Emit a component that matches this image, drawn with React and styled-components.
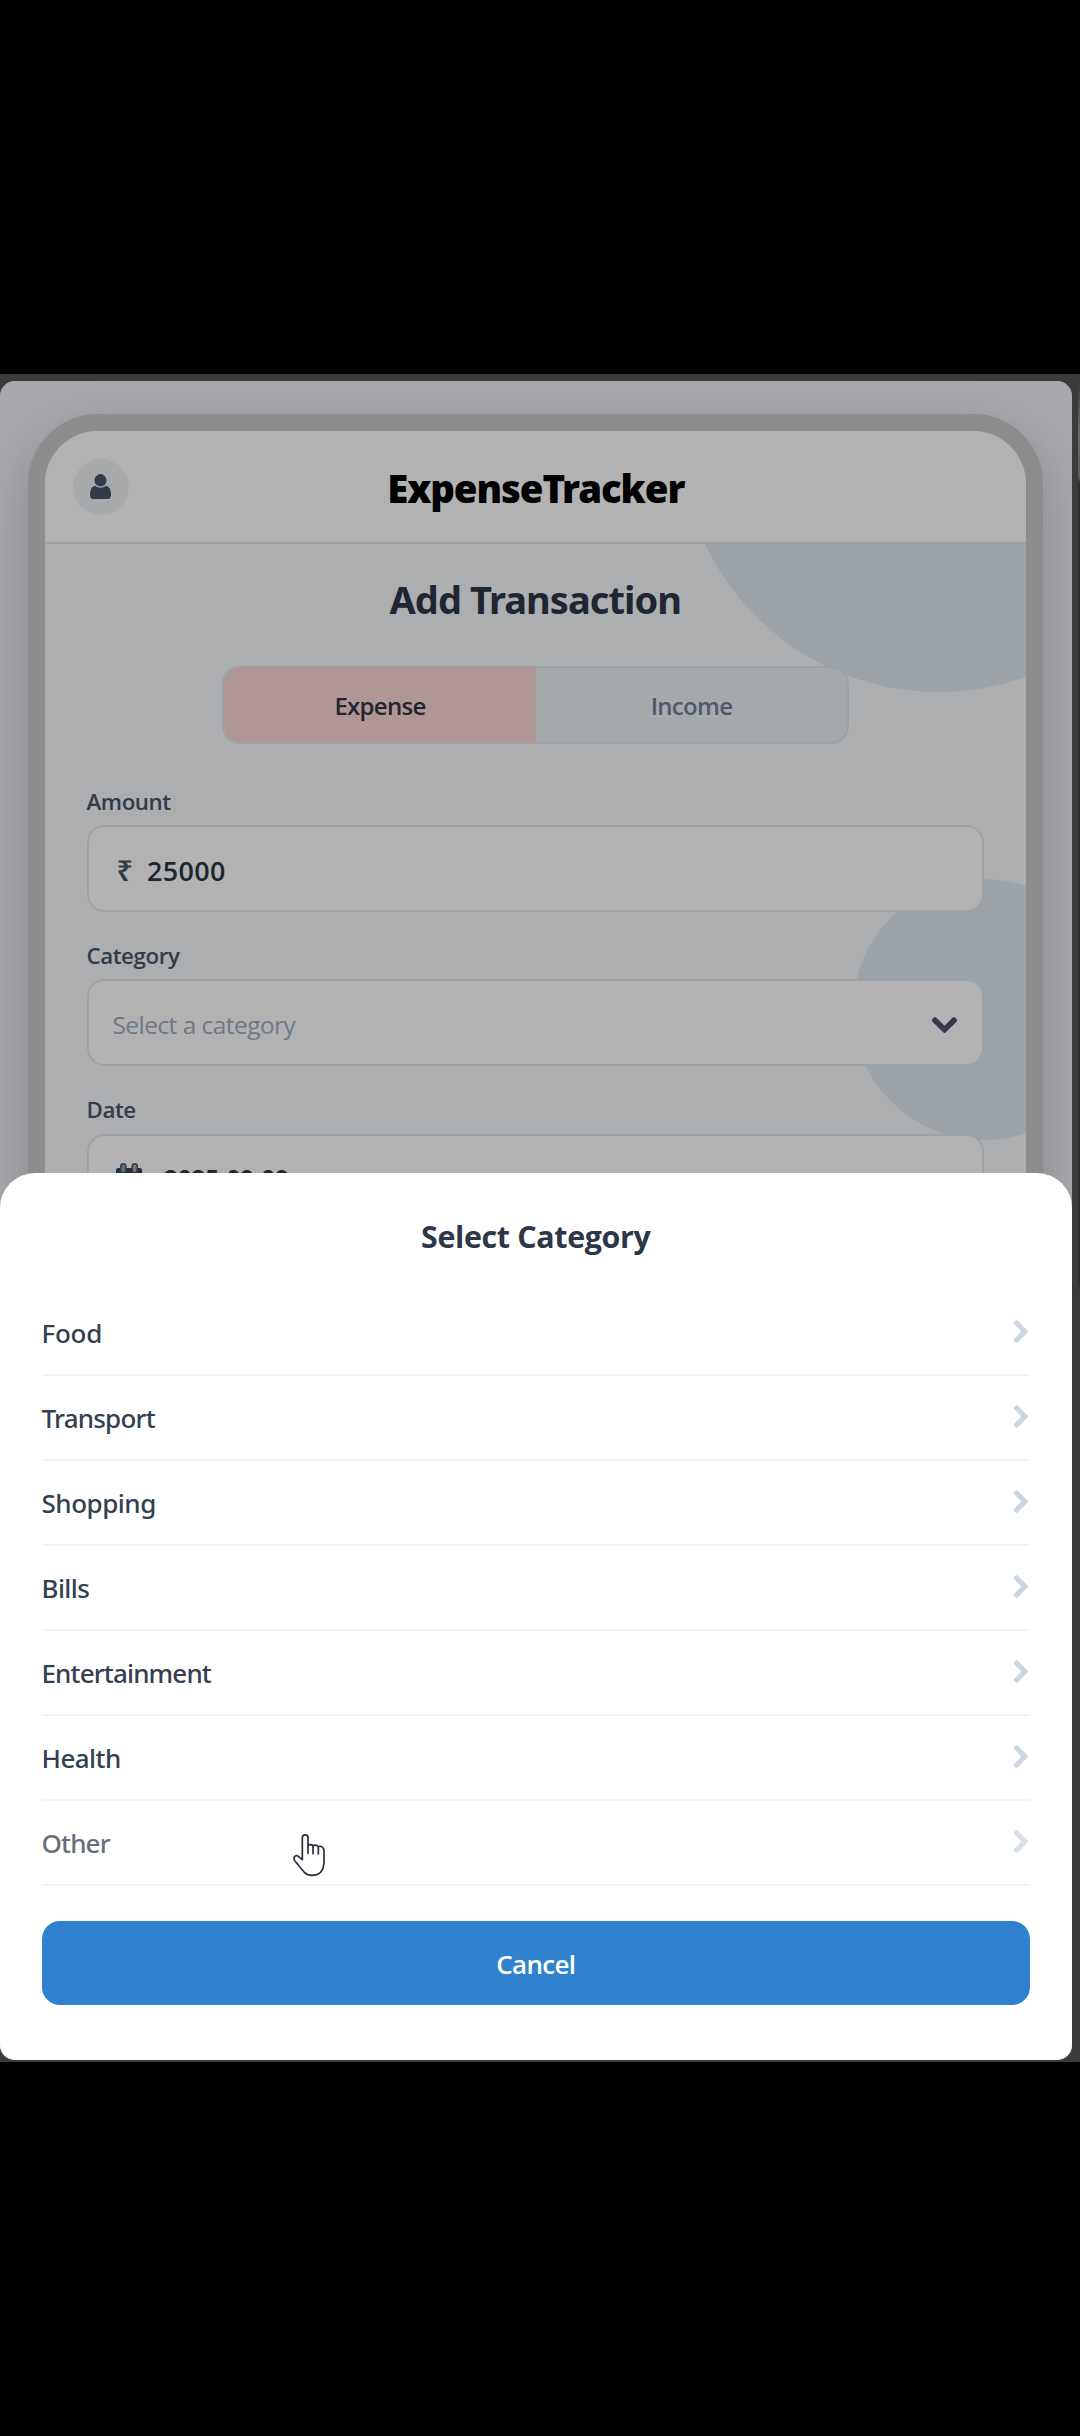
import React from "react";
import styled, { createGlobalStyle } from "styled-components";
import { FaChevronDown, FaChevronRight } from "react-icons/fa";

const sans = `"Open Sans", "Noto Sans", sans-serif`;
const noto = `"Noto Sans", "Open Sans", sans-serif`;

const GlobalStyle = createGlobalStyle`
  * { box-sizing: border-box; }
  body { margin: 0; background: #000; font-family: ${sans}; }
  h1, h2, h3, ul { margin: 0; padding: 0; }
  button { border: 0; font: inherit; background: none; }
`;

const Screen = styled.div`
  height: 2436px;
  padding-top: 374px;
  background: #000;
  overflow: hidden;
`;

const Window = styled.div`
  display: flex;
  justify-content: space-between;
  height: 1688px;
  padding: 7px 0 2px;
  background: #3b3b3b;
`;

const Page = styled.main`
  position: relative;
  width: 1071.5px;
  height: 1679px;
  padding: 33px 28.5px 0 27.5px;
  background: #f0f2f7;
  border-radius: 15px;
  overflow: hidden;
`;

const ScrollRail = styled.div`
  width: 2px;
  background: linear-gradient(#3b3b3b, #6a6a6a 50px, #5c5c5c 96px, #2e2e2e 102px, #2e2e2e 900px, #3b3b3b 910px);
`;

const Phone = styled.div`
  height: 1720px;
  border: 17.5px solid #cacaca;
  border-radius: 70px;
  overflow: hidden;
  background: #f7f9fc;
  box-shadow: 0 18px 52px rgba(0, 0, 0, 0.2);
`;

const Header = styled.header`
  display: grid;
  grid-template-columns: 1fr auto 1fr;
  align-items: center;
  height: 113px;
  padding: 0 28px;
  background: #fff;
  border-bottom: 2px solid #e4e6ea;
`;

const Avatar = styled.span`
  display: flex;
  align-items: center;
  justify-content: center;
  width: 56px;
  height: 56px;
  border-radius: 50%;
  background: #f1f2f5;
`;

const Brand = styled.h1`
  padding: 3px 0 0 1px;
  font: 900 38.3px/52px ${noto};
  letter-spacing: -1.05px;
  color: #000;
`;

const Content = styled.section`
  position: relative;
  height: 1600px;
  padding: 29px 42px 0;
  overflow: hidden;
`;

const Bubble = styled.span`
  position: absolute;
  left: ${(p) => p.$left}px;
  top: ${(p) => p.$top}px;
  width: ${(p) => p.$size}px;
  height: ${(p) => p.$size}px;
  border-radius: 50%;
  background: #e0ebf2;
`;

const Form = styled.div`
  position: relative;
  display: flex;
  flex-direction: column;
`;

const FormTitle = styled.h2`
  font: 700 38px/52px ${noto};
  letter-spacing: -0.94px;
  text-align: center;
  color: #2d3748;
`;

const Tabs = styled.div`
  display: flex;
  align-self: center;
  width: 627px;
  height: 78px;
  margin: 40.5px 0 42.5px 1px;
  border: 2px solid #e2e8f0;
  border-radius: 18px;
  background: #edf2f7;
  overflow: hidden;
`;

const Tab = styled.button`
  flex: 1;
  padding: 2px 0 0;
  font: 600 24px/34px ${sans};
  letter-spacing: -0.7px;
  background: ${(p) => (p.$active ? "#fed7d7" : "transparent")};
  color: ${(p) => (p.$active ? "#2d3748" : "#718096")};
`;

const Field = styled.div`
  display: flex;
  flex-direction: column;
  gap: 8.5px;
  margin-bottom: 28.8px;
`;

const Label = styled.label`
  padding-top: 0.5px;
  font: 600 22.3px/30px ${sans};
  letter-spacing: -0.42px;
  color: #4a5568;
`;

const Control = styled.div`
  display: flex;
  align-items: ${(p) => (p.$baseline ? "baseline" : "center")};
  height: 86.5px;
  padding: ${(p) => (p.$baseline ? "23px" : "5px")} 25px 0 ${(p) => p.$inset}px;
  border: 2px solid #e2e8f0;
  border-radius: 17.5px;
  background: #fff;
  color: #4a5568;
`;

const Currency = styled.span`
  width: 30.5px;
  font: 600 29px/40px ${noto};
`;

const Amount = styled.span`
  font: 600 26.9px/40px ${sans};
  letter-spacing: 0.35px;
  color: #2d3748;
`;

const Placeholder = styled.span`
  flex: 1;
  font: 400 24.4px/34px ${sans};
  letter-spacing: -0.5px;
  color: #a0aec0;
`;

const DateValue = styled.span`
  margin-left: 22px;
  font: 600 24.5px/34px ${noto};
  letter-spacing: -0.3px;
  color: #2d3748;
`;

const DownIcon = styled(FaChevronDown)`
  width: 25px;
  height: 28px;
  stroke: currentColor;
  stroke-width: 22;
  overflow: visible;
`;

const Overlay = styled.div`
  position: absolute;
  inset: 0;
  display: flex;
  align-items: flex-end;
  background: rgba(0, 0, 0, 0.3);
`;

const Sheet = styled.div`
  display: flex;
  flex-direction: column;
  width: 100%;
  height: 887px;
  padding: 42.5px 42px 0;
  border-radius: 35px 35px 0 0;
  background: #fff;
`;

const SheetTitle = styled.h3`
  margin-bottom: 33.5px;
  font: 700 30.4px/42px ${sans};
  letter-spacing: -0.34px;
  text-align: center;
  color: #2d3748;
`;

const List = styled.ul`
  display: flex;
  flex-direction: column;
  list-style: none;
`;

const Item = styled.li`
  display: flex;
  align-items: center;
  justify-content: space-between;
  height: 85px;
  border-bottom: 2px solid #f1f4f7;
  font: 500 26px/36px ${noto};
  letter-spacing: ${(p) => p.$tracking}px;
  color: #353f50;
`;

const Name = styled.span`
  margin-left: -0.5px;
  opacity: ${(p) => (p.$pressed ? 0.75 : 1)};
`;

const RightIcon = styled(FaChevronRight)`
  width: 15.6px;
  height: 25px;
  margin: 0 1px 2px 0;
  color: #cbd5e0;
  stroke: currentColor;
  stroke-width: 22;
  overflow: visible;
  opacity: ${(p) => p.opacity};
`;

const Cancel = styled.button`
  height: 84px;
  margin-top: 35px;
  padding: 1px 0 0;
  border-radius: 18px;
  background: #3182ce;
  color: #fff;
  font: 600 26px/36px ${sans};
  letter-spacing: -0.7px;
`;

const Pointer = styled.svg`
  position: absolute;
  left: 280px;
  top: 1439px;
  width: 60px;
  height: 70px;
`;

const categories = [
  { name: "Food", tracking: -0.25 },
  { name: "Transport", tracking: -0.8 },
  { name: "Shopping", tracking: -0.48 },
  { name: "Bills", tracking: -0.6 },
  { name: "Entertainment", tracking: -0.86 },
  { name: "Health", tracking: -0.55 },
  { name: "Other", tracking: -0.85, pressed: true },
];

function PersonIcon() {
  return (
    <svg width="21" height="25" viewBox="0 0 21 25" fill="#4a5568">
      <ellipse cx="10.500" cy="6.300" rx="6" ry="6.200" />
      <path d="M5 11.800q5.500 4 11 0q5 1 5 8.700q0 4.500-3.500 4.500h-14q-3.500 0-3.500-4.500q0-7.700 5-8.700z" />
    </svg>
  );
}

function CalendarIcon() {
  return (
    <svg width="26" height="32" viewBox="0 0 26 32">
      <path d="M2 5h22a2 2 0 0 1 2 2V28a2 2 0 0 1-2 2H2a2 2 0 0 1-2-2V7a2 2 0 0 1 2-2z" fill="#3a4558" />
      <path d="M2.500 13h21v14.500h-21z" fill="#fff" />
      <rect x="4.800" y="0.800" width="5" height="9" rx="2.500" fill="#7fa6c0" stroke="#4a5568" strokeWidth="1.500" />
      <rect x="16.200" y="0.800" width="5" height="9" rx="2.500" fill="#c3a595" stroke="#4a5568" strokeWidth="1.500" />
    </svg>
  );
}

export default function App() {
  return (
    <Screen>
      <GlobalStyle />
      <Window>
        <Page>
          <Phone>
            <Header>
              <Avatar>
                <PersonIcon />
              </Avatar>
              <Brand>ExpenseTracker</Brand>
            </Header>
            <Content>
              <Bubble $left={635.5} $top={-369} $size={517} />
              <Bubble $left={808} $top={334.5} $size={261} />
              <Form>
                <FormTitle>Add Transaction</FormTitle>
                <Tabs>
                  <Tab $active>Expense</Tab>
                  <Tab>Income</Tab>
                </Tabs>
                <Field>
                  <Label>Amount</Label>
                  <Control $baseline $inset={28}>
                    <Currency>₹</Currency>
                    <Amount>25000</Amount>
                  </Control>
                </Field>
                <Field>
                  <Label>Category</Label>
                  <Control $inset={24}>
                    <Placeholder>Select a category</Placeholder>
                    <DownIcon />
                  </Control>
                </Field>
                <Field>
                  <Label>Date</Label>
                  <Control $inset={27.5}>
                    <CalendarIcon />
                    <DateValue>2025-09-09</DateValue>
                  </Control>
                </Field>
              </Form>
            </Content>
          </Phone>
          <Overlay>
            <Sheet>
              <SheetTitle>Select Category</SheetTitle>
              <List>
                {categories.map(({ name, tracking, pressed }) => (
                  <Item key={name} $tracking={tracking}>
                    <Name $pressed={pressed}>{name}</Name>
                    <RightIcon opacity={pressed ? 0.75 : 1} />
                  </Item>
                ))}
              </List>
              <Cancel>Cancel</Cancel>
            </Sheet>
          </Overlay>
          <Pointer viewBox="0 0 180 210" fill="none" stroke="#2b2b38" strokeWidth="5" strokeLinejoin="round" strokeLinecap="round">
            <path
              fill="#fff"
              d="M67 119V53a8.500 8.500 0 0 1 17 0V76q8-5 15 1q9-5 16 3q9-4 15 5q2 3 2 10v27q0 44-36 44q-14 0-23-9L44 122q-5-10 2-14q6-3 12 4z"
            />
            <path d="M84 76v24M99 78v23M115 81v21" />
          </Pointer>
        </Page>
        <ScrollRail />
      </Window>
    </Screen>
  );
}
